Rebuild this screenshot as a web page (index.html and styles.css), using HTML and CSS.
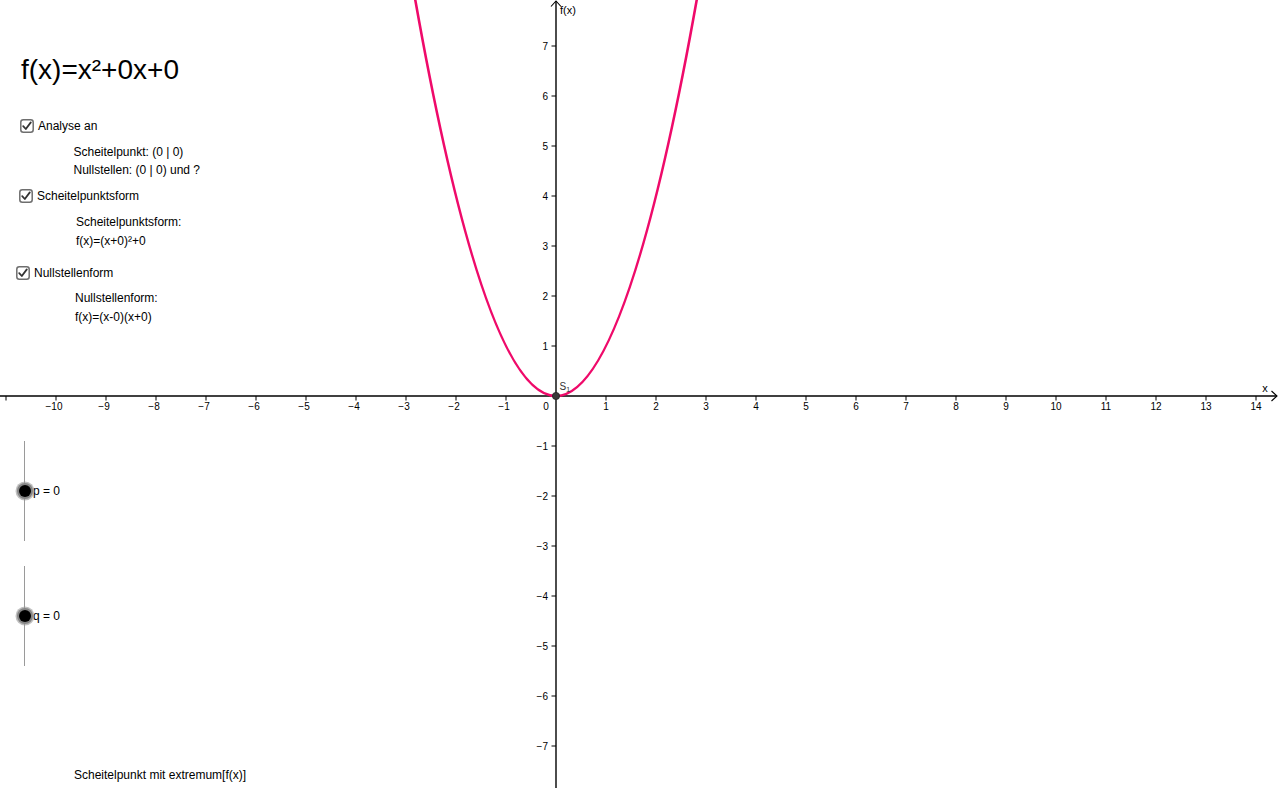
FILE: index.html
```html
<!DOCTYPE html>
<html lang="de">
<head>
<meta charset="utf-8">
<title>Parabel</title>
<link rel="stylesheet" href="styles.css">
</head>
<body>
<div class="stage">
  <svg class="canvas" width="1280" height="788" viewBox="0 0 1280 788" xmlns="http://www.w3.org/2000/svg">
    <g class="axes" stroke="#000" fill="none">
      <line x1="0" y1="396" x2="1277" y2="396" stroke-width="1.4"/>
      <polyline points="1271.5,391 1277,396 1271.5,401" stroke-width="1.1"/>
      <line x1="556" y1="1" x2="556" y2="788" stroke-width="1.4"/>
      <polyline points="551,6.5 556,1 561,6.5" stroke-width="1.1"/>
      <g id="xticks" stroke-width="1"></g>
      <g id="yticks" stroke-width="1"></g>
    </g>
    <g class="labels" font-family="Liberation Sans, Arial, sans-serif" font-size="10" fill="#000">
      <g id="xlabels" text-anchor="middle"></g>
      <g id="ylabels" text-anchor="end"></g>
      <text x="546" y="410" text-anchor="middle">0</text>
      <text x="1265" y="392" text-anchor="middle" font-size="11">x</text>
      <text x="560" y="14" font-size="11">f(x)</text>
    </g>
    <path d="M406,-54 Q556,846 706,-54" fill="none" stroke="#ef0a6a" stroke-width="2.6"/>
    <circle cx="556" cy="396" r="3.6" fill="#3a3a3a" stroke="#222" stroke-width="0.8"/>
    <text x="559.5" y="390" font-family="Liberation Sans, Arial, sans-serif" font-size="10" fill="#333">S<tspan font-size="7" dy="2">1</tspan></text>
  </svg>

  <div class="panel">
    <div class="title">f(x)=x²+0x+0</div>

    <label class="check check-a"><span class="box"><svg width="14" height="14" viewBox="0 0 14 14"><rect x="0.8" y="0.8" width="12.4" height="12.4" rx="2.5" fill="#fff" stroke="#6e6e6e" stroke-width="1.5"/><path d="M3.2,7.2 L5.8,10 L10.8,3.4" fill="none" stroke="#333" stroke-width="1.8" stroke-linecap="round" stroke-linejoin="round"/></svg></span><span>Analyse an</span></label>
    <div class="line ind-a gap8">Scheitelpunkt: (0 | 0)</div>
    <div class="line ind-a">Nullstellen: (0 | 0) und ?</div>

    <label class="check check-b"><span class="box"><svg width="14" height="14" viewBox="0 0 14 14"><rect x="0.8" y="0.8" width="12.4" height="12.4" rx="2.5" fill="#fff" stroke="#6e6e6e" stroke-width="1.5"/><path d="M3.2,7.2 L5.8,10 L10.8,3.4" fill="none" stroke="#333" stroke-width="1.8" stroke-linecap="round" stroke-linejoin="round"/></svg></span><span>Scheitelpunktsform</span></label>
    <div class="line ind-b gap8">Scheitelpunktsform:</div>
    <div class="line ind-b gap1">f(x)=(x+0)²+0</div>

    <label class="check check-c"><span class="box"><svg width="14" height="14" viewBox="0 0 14 14"><rect x="0.8" y="0.8" width="12.4" height="12.4" rx="2.5" fill="#fff" stroke="#6e6e6e" stroke-width="1.5"/><path d="M3.2,7.2 L5.8,10 L10.8,3.4" fill="none" stroke="#333" stroke-width="1.8" stroke-linecap="round" stroke-linejoin="round"/></svg></span><span>Nullstellenform</span></label>
    <div class="line ind-c gap7">Nullstellenform:</div>
    <div class="line ind-c gap1">f(x)=(x-0)(x+0)</div>

    <div class="slider slider-p">
      <div class="track"><span class="knob"></span></div>
      <span class="slabel">p = 0</span>
    </div>
    <div class="slider slider-q">
      <div class="track"><span class="knob"></span></div>
      <span class="slabel">q = 0</span>
    </div>

    <div class="line ind-d">Scheitelpunkt mit extremum[f(x)]</div>
  </div>
</div>
<script>
(function(){
  var ns="http://www.w3.org/2000/svg";
  var xt=document.getElementById("xticks"), yt=document.getElementById("yticks");
  var xl=document.getElementById("xlabels"), yl=document.getElementById("ylabels");
  function el(n,a){var e=document.createElementNS(ns,n);for(var k in a)e.setAttribute(k,a[k]);return e;}
  for(var k=-11;k<=14;k++){
    if(k===0)continue;
    var x=556+50*k;
    xt.appendChild(el("line",{x1:x,y1:396,x2:x,y2:400.5}));
    if(k>=-10){var t=el("text",{x:k<0?x-2:x,y:410});t.textContent=(k<0?"\u2212":"")+Math.abs(k);xl.appendChild(t);}
  }
  for(var j=-7;j<=7;j++){
    if(j===0)continue;
    var y=396-50*j;
    yt.appendChild(el("line",{x1:551.5,y1:y,x2:556,y2:y}));
    var t2=el("text",{x:548,y:y+3.6});t2.textContent=(j<0?"\u2212":"")+Math.abs(j);yl.appendChild(t2);
  }
})();
</script>
</body>
</html>
```

FILE: styles.css
```css
html, body {
  margin: 0;
  padding: 0;
  background: #fff;
}
.stage {
  position: relative;
  width: 1280px;
  height: 788px;
  overflow: hidden;
  font-family: "Liberation Sans", Arial, sans-serif;
  color: #000;
}
.canvas {
  position: absolute;
  left: 0;
  top: 0;
}
.panel {
  position: relative;
  display: flex;
  flex-direction: column;
  align-items: flex-start;
  padding-top: 56px;
}
.title {
  margin-left: 21px;
  height: 28px;
  font-size: 28px;
  line-height: 28px;
  white-space: nowrap;
}
.check {
  display: flex;
  align-items: center;
  gap: 4px;
  height: 18px;
  font-size: 12px;
  line-height: 18px;
  white-space: nowrap;
}
.box {
  display: flex;
  width: 14px;
  height: 14px;
}
.check-a { margin-left: 20px; margin-top: 33px; }
.check-b { margin-left: 19px; margin-top: 8px; }
.check-c { margin-left: 16px; margin-top: 14px; }
.line {
  height: 18px;
  font-size: 12px;
  line-height: 18px;
  white-space: nowrap;
}
.ind-a { margin-left: 73.5px; }
.ind-b { margin-left: 76px; }
.ind-c { margin-left: 75px; }
.ind-d { margin-left: 74px; margin-top: 100px; }
.gap1 { margin-top: 1px; }
.gap7 { margin-top: 7px; }
.gap8 { margin-top: 8px; }
.slider {
  display: flex;
  align-items: center;
  height: 100px;
  margin-left: 24px;
}
.slider-p { margin-top: 115px; }
.slider-q { margin-top: 25px; }
.track {
  position: relative;
  width: 1px;
  height: 100px;
  background: #9a9a9a;
}
.knob {
  position: absolute;
  left: -5.5px;
  top: 44px;
  width: 12px;
  height: 12px;
  border-radius: 50%;
  background: #000;
  box-shadow: 0 0 0 2px #858585, 0 0 0 3.5px rgba(150, 150, 150, 0.6);
}
.slabel {
  margin-left: 8px;
  font-size: 12px;
  line-height: 18px;
  white-space: nowrap;
}
```
